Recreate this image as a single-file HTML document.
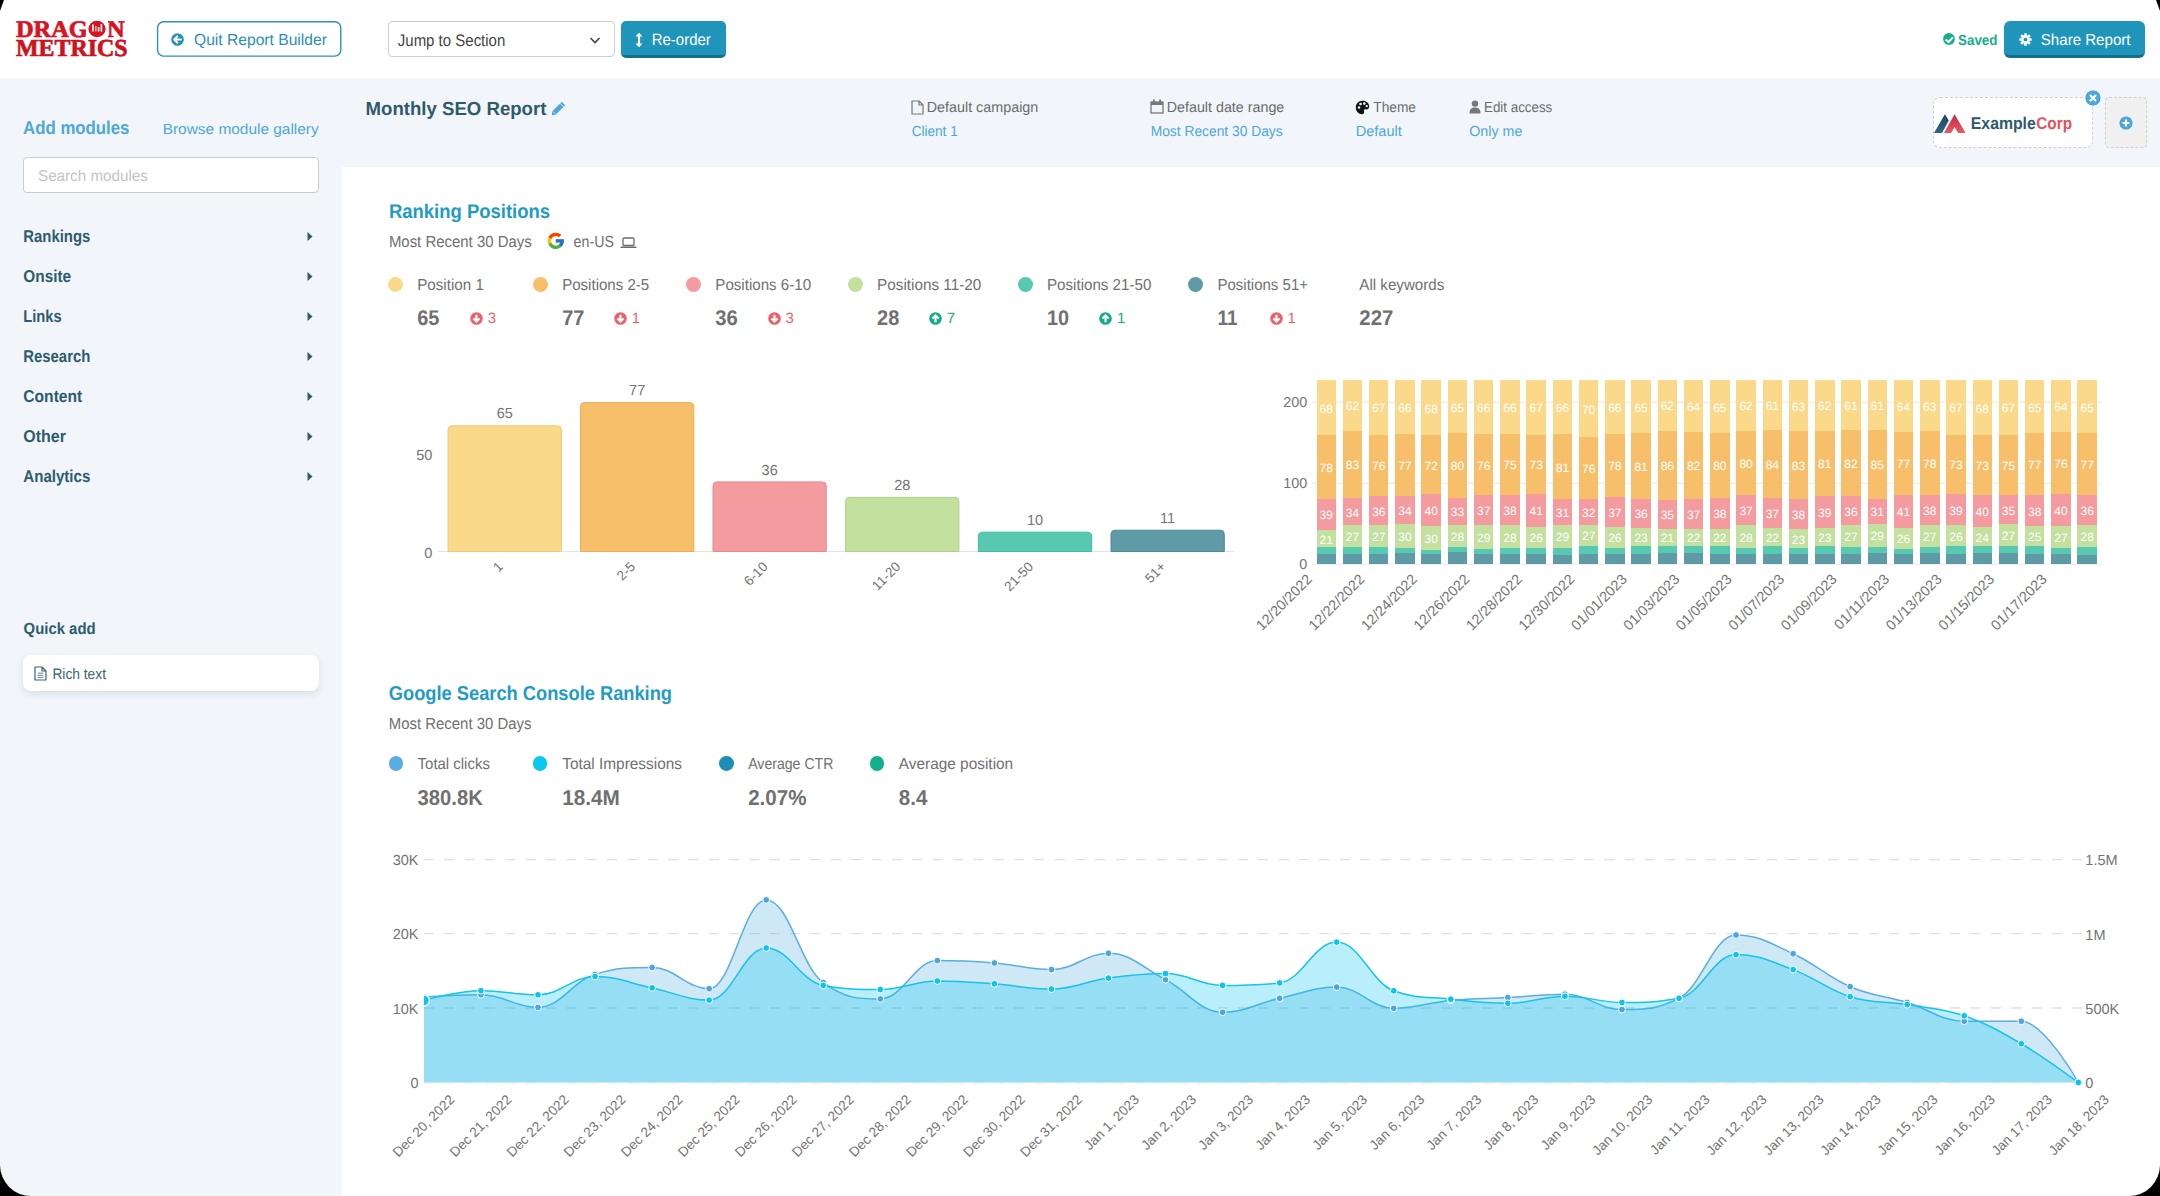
<!DOCTYPE html><html><head><meta charset="utf-8"><style>
html,body{margin:0;padding:0;width:2160px;height:1196px;overflow:hidden;background:#fff;}
body{position:relative;font-family:"Liberation Sans", sans-serif;}
.t{position:absolute;white-space:nowrap;text-rendering:geometricPrecision;}
.abs{position:absolute;}
</style></head><body>
<div class="abs" style="left:0;top:78px;width:2160px;height:1118px;background:#f2f6fa;"></div>
<div class="abs" style="left:342px;top:167px;width:1818px;height:1029px;background:#ffffff;"></div>


<svg class="abs" style="left:150px;top:15px" width="200" height="50"><rect x="7.6" y="6.7" width="183.2" height="34.4" rx="6" fill="#fff" stroke="#2a93bb" stroke-width="1.4"/></svg>
<svg class="abs" style="left:171px;top:32.8px" width="13" height="13" viewBox="0 0 13 13"><circle cx="6.5" cy="6.5" r="6.3" fill="#2590b8"/><path d="M3.2 6.5 L6.3 3.4 M3.2 6.5 L6.3 9.6 M3.4 6.5 H9.8" stroke="#fff" stroke-width="2" fill="none" stroke-linecap="round"/></svg>

<div class="abs" style="left:387.5px;top:21.2px;width:225.5px;height:33.5px;border:1px solid #cfcfcf;border-radius:4px;background:#fff;"></div>

<svg class="abs" style="left:589px;top:36px" width="12" height="9" viewBox="0 0 12 9"><path d="M1.5 2 L6 6.5 L10.5 2" stroke="#444" stroke-width="1.6" fill="none"/></svg>
<div class="abs" style="left:620.8px;top:21.2px;width:105.5px;height:33.6px;background:#1f95bb;border-bottom:3px solid #156f8b;border-radius:5px;"></div>
<svg class="abs" style="left:634px;top:31.5px" width="10" height="16" viewBox="0 0 10 16"><path d="M5 2 V14" stroke="#fff" stroke-width="2.2"/><path d="M1.5 4.5 L5 0.8 L8.5 4.5 Z M1.5 11.5 L5 15.2 L8.5 11.5 Z" fill="#fff"/></svg>

<svg class="abs" style="left:1941.5px;top:32px" width="14" height="14" viewBox="0 0 14 14"><circle cx="7" cy="7" r="5.9" fill="#17ae8a"/><path d="M3.6 7.4 L6.6 10 L10.8 5.4" stroke="#fff" stroke-width="2" fill="none"/></svg>

<div class="abs" style="left:2003.7px;top:21px;width:141.3px;height:34px;background:#1f95bb;border-bottom:3px solid #156f8b;border-radius:6px;"></div>
<svg class="abs" style="left:2018.5px;top:32.8px" width="13" height="13" viewBox="0 0 14 14"><g fill="#fff"><circle cx="7" cy="7" r="4.6"/><rect x="5.6" y="0.3" width="2.8" height="13.4" rx="0.6"/><rect x="5.6" y="0.3" width="2.8" height="13.4" rx="0.6" transform="rotate(45 7 7)"/><rect x="5.6" y="0.3" width="2.8" height="13.4" rx="0.6" transform="rotate(90 7 7)"/><rect x="5.6" y="0.3" width="2.8" height="13.4" rx="0.6" transform="rotate(135 7 7)"/></g><circle cx="7" cy="7" r="2" fill="#1f95bb"/></svg>


<svg class="abs" style="left:551px;top:100.5px" width="15" height="15" viewBox="0 0 15 15"><path d="M10.8 0.8 L14.2 4.2 L4.6 13.8 L0.8 14.2 L1.2 10.4 Z" fill="#4ea7da"/><path d="M9.2 2.4 L12.6 5.8" stroke="#f2f6fa" stroke-width="0.9"/><path d="M2.2 10.6 L4.4 12.8" stroke="#f2f6fa" stroke-width="0.8"/></svg>








<svg class="abs" style="left:910.5px;top:99.5px" width="13" height="15" viewBox="0 0 13 15"><path d="M1 1 H8 L12 5 V14 H1 Z M8 1 V5 H12" stroke="#777" stroke-width="1.2" fill="none" stroke-linejoin="round"/></svg>
<svg class="abs" style="left:1149.5px;top:99px" width="14" height="15" viewBox="0 0 14 15"><rect x="1" y="3" width="12" height="11" stroke="#777" stroke-width="1.3" fill="none"/><rect x="1" y="3" width="12" height="3" fill="#777"/><rect x="3" y="0.5" width="1.8" height="3.5" fill="#777"/><rect x="9.2" y="0.5" width="1.8" height="3.5" fill="#777"/></svg>
<svg class="abs" style="left:1354.5px;top:99.5px" width="15" height="15" viewBox="0 0 15 15"><path d="M7.5 0.8 C11.6 0.8 14.2 3.5 14.2 6.6 C14.2 9.2 12 9.6 10.5 9.3 C9.2 9.1 8.6 10 9 11 C9.6 12.4 9 14.2 7.2 14.2 C3.5 14.2 0.8 11.3 0.8 7.5 C0.8 3.6 3.8 0.8 7.5 0.8 Z" fill="#111"/><circle cx="4" cy="7.5" r="1.3" fill="#f2f6fa"/><circle cx="5.5" cy="4" r="1.3" fill="#f2f6fa"/><circle cx="9.3" cy="3.6" r="1.3" fill="#f2f6fa"/><circle cx="11.8" cy="6.2" r="1.1" fill="#f2f6fa"/></svg>
<svg class="abs" style="left:1468.5px;top:99.5px" width="12" height="14" viewBox="0 0 12 14"><circle cx="6" cy="3.6" r="3.2" fill="#777"/><path d="M0.5 13.5 C0.5 9 2.5 7.6 6 7.6 C9.5 7.6 11.5 9 11.5 13.5 Z" fill="#777"/></svg>
<div class="abs" style="left:1933px;top:97px;width:157.5px;height:49px;border:1px dashed #cfcfcf;border-radius:7px;background:#fff;"></div>
<svg class="abs" style="left:1934px;top:114px" width="33" height="20" viewBox="0 0 33 20"><defs><linearGradient id="gd" x1="0" y1="0" x2="0" y2="1"><stop offset="0" stop-color="#1e4860"/><stop offset="1" stop-color="#2f6683"/></linearGradient><linearGradient id="gr" x1="0" y1="0" x2="0" y2="1"><stop offset="0" stop-color="#c92848"/><stop offset="1" stop-color="#e35c5e"/></linearGradient></defs><path d="M0 18.9 L10.9 0.3 L14.8 6.6 L8 18.9 Z" fill="url(#gd)"/><path d="M9.9 18.9 L20.6 0.3 L31.6 18.9 L24.2 18.9 L20.6 13 L17.1 18.9 Z" fill="url(#gr)"/></svg>


<svg class="abs" style="left:2084px;top:89.3px" width="18" height="18" viewBox="0 0 18 18"><circle cx="9" cy="9" r="8.2" fill="#4ea7da" stroke="#fff" stroke-width="1"/><path d="M6 6 L12 12 M12 6 L6 12" stroke="#fff" stroke-width="2.2"/></svg>
<div class="abs" style="left:2104.5px;top:97px;width:40px;height:49px;border:1px dashed #cfcfcf;border-radius:4px;background:#f0f0f0;"></div>
<svg class="abs" style="left:2118.5px;top:115.7px" width="14" height="14" viewBox="0 0 14 14"><circle cx="7" cy="7" r="6.6" fill="#4ea7da"/><path d="M3.6 7 H10.4 M7 3.6 V10.4" stroke="#fff" stroke-width="2"/></svg>


<div class="abs" style="left:23.1px;top:157.1px;width:293.6px;height:33.6px;border:1px solid #cccccc;border-radius:4px;background:#fff;"></div>


<svg class="abs" style="left:307px;top:230.9px" width="6" height="11" viewBox="0 0 6 11"><path d="M0.5 1 L5.5 5.5 L0.5 10 Z" fill="#2d5b6f"/></svg>

<svg class="abs" style="left:307px;top:270.9px" width="6" height="11" viewBox="0 0 6 11"><path d="M0.5 1 L5.5 5.5 L0.5 10 Z" fill="#2d5b6f"/></svg>

<svg class="abs" style="left:307px;top:310.9px" width="6" height="11" viewBox="0 0 6 11"><path d="M0.5 1 L5.5 5.5 L0.5 10 Z" fill="#2d5b6f"/></svg>

<svg class="abs" style="left:307px;top:350.9px" width="6" height="11" viewBox="0 0 6 11"><path d="M0.5 1 L5.5 5.5 L0.5 10 Z" fill="#2d5b6f"/></svg>

<svg class="abs" style="left:307px;top:390.9px" width="6" height="11" viewBox="0 0 6 11"><path d="M0.5 1 L5.5 5.5 L0.5 10 Z" fill="#2d5b6f"/></svg>

<svg class="abs" style="left:307px;top:430.9px" width="6" height="11" viewBox="0 0 6 11"><path d="M0.5 1 L5.5 5.5 L0.5 10 Z" fill="#2d5b6f"/></svg>

<svg class="abs" style="left:307px;top:470.9px" width="6" height="11" viewBox="0 0 6 11"><path d="M0.5 1 L5.5 5.5 L0.5 10 Z" fill="#2d5b6f"/></svg>

<div class="abs" style="left:23.2px;top:654.7px;width:295.8px;height:35.9px;border-radius:8px;background:#fff;box-shadow:0 3px 7px rgba(40,70,90,0.13);"></div>
<svg class="abs" style="left:33.5px;top:665.8px" width="13" height="15" viewBox="0 0 13 15"><path d="M1 1 H8 L12 5 V14 H1 Z M8 1 V5 H12" stroke="#3d6476" stroke-width="1.2" fill="none" stroke-linejoin="round"/><path d="M3.6 7.2 H9.4 M3.6 9.4 H9.4 M3.6 11.6 H9.4" stroke="#3d6476" stroke-width="0.8"/></svg>




<svg class="abs" style="left:546px;top:231px" width="19.5" height="19.5" viewBox="0 0 48 48"><path fill="#FFC107" d="M43.6 20H24v8h11.3C33.7 32.7 29.3 36 24 36c-6.6 0-12-5.4-12-12s5.4-12 12-12c3.1 0 5.8 1.2 7.9 3.1l5.7-5.7C34 6.1 29.3 4 24 4 13 4 4 13 4 24s9 20 20 20 20-9 20-20c0-1.3-.1-2.7-.4-4z"/><path fill="#FF3D00" d="M6.3 14.7l6.6 4.8C14.7 15.1 19 12 24 12c3.1 0 5.8 1.2 7.9 3.1l5.7-5.7C34 6.1 29.3 4 24 4 16.3 4 9.7 8.3 6.3 14.7z"/><path fill="#4CAF50" d="M24 44c5.2 0 9.9-2 13.4-5.2l-6.2-5.2C29.2 35.1 26.7 36 24 36c-5.2 0-9.6-3.3-11.3-8l-6.5 5C9.5 39.6 16.2 44 24 44z"/><path fill="#1976D2" d="M43.6 20H24v8h11.3c-.8 2.2-2.2 4.2-4.1 5.6l6.2 5.2C37 39.2 44 34 44 24c0-1.3-.1-2.7-.4-4z"/></svg>
<svg class="abs" style="left:619.5px;top:237px" width="17" height="12" viewBox="0 0 17 12"><rect x="3" y="1" width="11" height="7.5" rx="1" stroke="#6b6b6b" stroke-width="1.3" fill="none"/><rect x="0.5" y="9.6" width="16" height="1.5" rx="0.7" fill="#6b6b6b"/></svg>
<div class="abs" style="left:388.3px;top:276.8px;width:15px;height:15px;border-radius:50%;background:#fbd98b;"></div>


<svg class="abs" style="left:470.0px;top:311.8px" width="13" height="13" viewBox="0 0 13 13"><circle cx="6.5" cy="6.5" r="6.3" fill="#ee5f6b"/><path d="M6.5 2.8 V9.2 M3.4 6.4 L6.5 9.5 L9.6 6.4" stroke="#fff" stroke-width="2.1" fill="none"/></svg>

<div class="abs" style="left:532.8px;top:276.8px;width:15px;height:15px;border-radius:50%;background:#f7bf6a;"></div>


<svg class="abs" style="left:614.1px;top:311.8px" width="13" height="13" viewBox="0 0 13 13"><circle cx="6.5" cy="6.5" r="6.3" fill="#ee5f6b"/><path d="M6.5 2.8 V9.2 M3.4 6.4 L6.5 9.5 L9.6 6.4" stroke="#fff" stroke-width="2.1" fill="none"/></svg>

<div class="abs" style="left:686.1px;top:276.8px;width:15px;height:15px;border-radius:50%;background:#f49ba0;"></div>


<svg class="abs" style="left:767.7px;top:311.8px" width="13" height="13" viewBox="0 0 13 13"><circle cx="6.5" cy="6.5" r="6.3" fill="#ee5f6b"/><path d="M6.5 2.8 V9.2 M3.4 6.4 L6.5 9.5 L9.6 6.4" stroke="#fff" stroke-width="2.1" fill="none"/></svg>

<div class="abs" style="left:848.0px;top:276.8px;width:15px;height:15px;border-radius:50%;background:#c3e09f;"></div>


<svg class="abs" style="left:929.1px;top:311.8px" width="13" height="13" viewBox="0 0 13 13"><circle cx="6.5" cy="6.5" r="6.3" fill="#14ab8c"/><path d="M6.5 10.2 V3.8 M3.4 6.6 L6.5 3.5 L9.6 6.6" stroke="#fff" stroke-width="2.1" fill="none"/></svg>

<div class="abs" style="left:1018.0px;top:276.8px;width:15px;height:15px;border-radius:50%;background:#56c9b0;"></div>


<svg class="abs" style="left:1099.4px;top:311.8px" width="13" height="13" viewBox="0 0 13 13"><circle cx="6.5" cy="6.5" r="6.3" fill="#14ab8c"/><path d="M6.5 10.2 V3.8 M3.4 6.6 L6.5 3.5 L9.6 6.6" stroke="#fff" stroke-width="2.1" fill="none"/></svg>

<div class="abs" style="left:1188.0px;top:276.8px;width:15px;height:15px;border-radius:50%;background:#5e9ba7;"></div>


<svg class="abs" style="left:1269.7px;top:311.8px" width="13" height="13" viewBox="0 0 13 13"><circle cx="6.5" cy="6.5" r="6.3" fill="#ee5f6b"/><path d="M6.5 2.8 V9.2 M3.4 6.4 L6.5 9.5 L9.6 6.4" stroke="#fff" stroke-width="2.1" fill="none"/></svg>





<div class="abs" style="left:388.5px;top:756.3px;width:14.8px;height:14.8px;border-radius:50%;background:#5aade0;"></div>


<div class="abs" style="left:532.7px;top:756.3px;width:14.8px;height:14.8px;border-radius:50%;background:#0bc8f0;"></div>


<div class="abs" style="left:719.1px;top:756.3px;width:14.8px;height:14.8px;border-radius:50%;background:#1e8db5;"></div>


<div class="abs" style="left:869.7px;top:756.3px;width:14.8px;height:14.8px;border-radius:50%;background:#11b089;"></div>


<svg class="abs" style="left:0;top:0" width="2160" height="1196" viewBox="0 0 2160 1196" font-family="Liberation Sans, sans-serif" text-rendering="geometricPrecision">
<line x1="438" y1="551.5" x2="1234" y2="551.5" stroke="#e3e3e3" stroke-width="1.2"/>
<path d="M 448.10 551.50 V 429.79 Q 448.10 425.79 452.10 425.79 H 557.40 Q 561.40 425.79 561.40 429.79 V 551.50 Z" fill="#fbd98b" stroke="#efc777" stroke-width="1"/>
<text x="504.75" y="418.49" font-size="14.54" fill="#747474" text-anchor="middle" >65</text>
<text x="503.75" y="567.50" font-size="13.5" fill="#747474" text-anchor="end" transform="rotate(-45 503.75 567.50)">1</text>
<path d="M 580.50 551.50 V 406.58 Q 580.50 402.58 584.50 402.58 H 689.80 Q 693.80 402.58 693.80 406.58 V 551.50 Z" fill="#f7bf6a" stroke="#ecae58" stroke-width="1"/>
<text x="637.15" y="395.28" font-size="14.54" fill="#747474" text-anchor="middle" >77</text>
<text x="636.15" y="567.50" font-size="13.5" fill="#747474" text-anchor="end" transform="rotate(-45 636.15 567.50)">2-5</text>
<path d="M 713.00 551.50 V 485.88 Q 713.00 481.88 717.00 481.88 H 822.30 Q 826.30 481.88 826.30 485.88 V 551.50 Z" fill="#f49ba0" stroke="#e68a90" stroke-width="1"/>
<text x="769.65" y="474.58" font-size="14.54" fill="#747474" text-anchor="middle" >36</text>
<text x="768.65" y="567.50" font-size="13.5" fill="#747474" text-anchor="end" transform="rotate(-45 768.65 567.50)">6-10</text>
<path d="M 845.60 551.50 V 501.35 Q 845.60 497.35 849.60 497.35 H 954.90 Q 958.90 497.35 958.90 501.35 V 551.50 Z" fill="#c3e09f" stroke="#afd18b" stroke-width="1"/>
<text x="902.25" y="490.05" font-size="14.54" fill="#747474" text-anchor="middle" >28</text>
<text x="901.25" y="567.50" font-size="13.5" fill="#747474" text-anchor="end" transform="rotate(-45 901.25 567.50)">11-20</text>
<path d="M 978.40 551.50 V 536.16 Q 978.40 532.16 982.40 532.16 H 1087.70 Q 1091.70 532.16 1091.70 536.16 V 551.50 Z" fill="#56c9b0" stroke="#47b89f" stroke-width="1"/>
<text x="1035.05" y="524.86" font-size="14.54" fill="#747474" text-anchor="middle" >10</text>
<text x="1034.05" y="567.50" font-size="13.5" fill="#747474" text-anchor="end" transform="rotate(-45 1034.05 567.50)">21-50</text>
<path d="M 1111.00 551.50 V 534.23 Q 1111.00 530.23 1115.00 530.23 H 1220.30 Q 1224.30 530.23 1224.30 534.23 V 551.50 Z" fill="#5e9ba7" stroke="#4f8b96" stroke-width="1"/>
<text x="1167.65" y="522.93" font-size="14.54" fill="#747474" text-anchor="middle" >11</text>
<text x="1166.65" y="567.50" font-size="13.5" fill="#747474" text-anchor="end" transform="rotate(-45 1166.65 567.50)">51+</text>
<text x="432.40" y="460.00" font-size="14.54" fill="#747474" text-anchor="end" >50</text>
<text x="432.40" y="557.50" font-size="14.54" fill="#747474" text-anchor="end" >0</text>
<line x1="1312" y1="564.2" x2="2101" y2="564.2" stroke="#e6e6e6" stroke-width="1"/>
<line x1="1312" y1="483.2" x2="2101" y2="483.2" stroke="#e6e6e6" stroke-width="1"/>
<line x1="1312" y1="402.2" x2="2101" y2="402.2" stroke="#e6e6e6" stroke-width="1"/>
<text x="1307.20" y="407.20" font-size="14.39" fill="#747474" text-anchor="end" >200</text>
<text x="1307.20" y="488.20" font-size="14.39" fill="#747474" text-anchor="end" >100</text>
<text x="1307.20" y="569.20" font-size="14.39" fill="#747474" text-anchor="end" >0</text>
<rect x="1316.50" y="380.33" width="19.5" height="183.87" fill="#fbd98b" shape-rendering="crispEdges"/>
<rect x="1316.50" y="435.41" width="19.5" height="128.79" fill="#f7bf6a" shape-rendering="crispEdges"/>
<rect x="1316.50" y="498.59" width="19.5" height="65.61" fill="#f49ba0" shape-rendering="crispEdges"/>
<rect x="1316.50" y="530.18" width="19.5" height="34.02" fill="#c3e09f" shape-rendering="crispEdges"/>
<rect x="1316.50" y="547.19" width="19.5" height="17.01" fill="#56c9b0" shape-rendering="crispEdges"/>
<rect x="1316.50" y="554.48" width="19.5" height="9.72" fill="#5e9ba7" shape-rendering="crispEdges"/>
<text x="1312.95" y="580.20" font-size="14.4" fill="#747474" text-anchor="end" transform="rotate(-45 1312.95 580.20)">12/20/2022</text>
<rect x="1342.74" y="380.33" width="19.5" height="183.87" fill="#fbd98b" shape-rendering="crispEdges"/>
<rect x="1342.74" y="430.55" width="19.5" height="133.65" fill="#f7bf6a" shape-rendering="crispEdges"/>
<rect x="1342.74" y="497.78" width="19.5" height="66.42" fill="#f49ba0" shape-rendering="crispEdges"/>
<rect x="1342.74" y="525.32" width="19.5" height="38.88" fill="#c3e09f" shape-rendering="crispEdges"/>
<rect x="1342.74" y="547.19" width="19.5" height="17.01" fill="#56c9b0" shape-rendering="crispEdges"/>
<rect x="1342.74" y="554.48" width="19.5" height="9.72" fill="#5e9ba7" shape-rendering="crispEdges"/>
<rect x="1368.98" y="380.33" width="19.5" height="183.87" fill="#fbd98b" shape-rendering="crispEdges"/>
<rect x="1368.98" y="434.60" width="19.5" height="129.60" fill="#f7bf6a" shape-rendering="crispEdges"/>
<rect x="1368.98" y="496.16" width="19.5" height="68.04" fill="#f49ba0" shape-rendering="crispEdges"/>
<rect x="1368.98" y="525.32" width="19.5" height="38.88" fill="#c3e09f" shape-rendering="crispEdges"/>
<rect x="1368.98" y="547.19" width="19.5" height="17.01" fill="#56c9b0" shape-rendering="crispEdges"/>
<rect x="1368.98" y="553.67" width="19.5" height="10.53" fill="#5e9ba7" shape-rendering="crispEdges"/>
<text x="1365.43" y="580.20" font-size="14.4" fill="#747474" text-anchor="end" transform="rotate(-45 1365.43 580.20)">12/22/2022</text>
<rect x="1395.22" y="380.33" width="19.5" height="183.87" fill="#fbd98b" shape-rendering="crispEdges"/>
<rect x="1395.22" y="433.79" width="19.5" height="130.41" fill="#f7bf6a" shape-rendering="crispEdges"/>
<rect x="1395.22" y="496.16" width="19.5" height="68.04" fill="#f49ba0" shape-rendering="crispEdges"/>
<rect x="1395.22" y="523.70" width="19.5" height="40.50" fill="#c3e09f" shape-rendering="crispEdges"/>
<rect x="1395.22" y="548.00" width="19.5" height="16.20" fill="#56c9b0" shape-rendering="crispEdges"/>
<rect x="1395.22" y="552.86" width="19.5" height="11.34" fill="#5e9ba7" shape-rendering="crispEdges"/>
<rect x="1421.46" y="380.33" width="19.5" height="183.87" fill="#fbd98b" shape-rendering="crispEdges"/>
<rect x="1421.46" y="435.41" width="19.5" height="128.79" fill="#f7bf6a" shape-rendering="crispEdges"/>
<rect x="1421.46" y="493.73" width="19.5" height="70.47" fill="#f49ba0" shape-rendering="crispEdges"/>
<rect x="1421.46" y="526.13" width="19.5" height="38.07" fill="#c3e09f" shape-rendering="crispEdges"/>
<rect x="1421.46" y="550.43" width="19.5" height="13.77" fill="#56c9b0" shape-rendering="crispEdges"/>
<rect x="1421.46" y="553.67" width="19.5" height="10.53" fill="#5e9ba7" shape-rendering="crispEdges"/>
<text x="1417.91" y="580.20" font-size="14.4" fill="#747474" text-anchor="end" transform="rotate(-45 1417.91 580.20)">12/24/2022</text>
<rect x="1447.70" y="380.33" width="19.5" height="183.87" fill="#fbd98b" shape-rendering="crispEdges"/>
<rect x="1447.70" y="432.98" width="19.5" height="131.22" fill="#f7bf6a" shape-rendering="crispEdges"/>
<rect x="1447.70" y="497.78" width="19.5" height="66.42" fill="#f49ba0" shape-rendering="crispEdges"/>
<rect x="1447.70" y="524.51" width="19.5" height="39.69" fill="#c3e09f" shape-rendering="crispEdges"/>
<rect x="1447.70" y="547.19" width="19.5" height="17.01" fill="#56c9b0" shape-rendering="crispEdges"/>
<rect x="1447.70" y="552.05" width="19.5" height="12.15" fill="#5e9ba7" shape-rendering="crispEdges"/>
<rect x="1473.94" y="380.33" width="19.5" height="183.87" fill="#fbd98b" shape-rendering="crispEdges"/>
<rect x="1473.94" y="433.79" width="19.5" height="130.41" fill="#f7bf6a" shape-rendering="crispEdges"/>
<rect x="1473.94" y="495.35" width="19.5" height="68.85" fill="#f49ba0" shape-rendering="crispEdges"/>
<rect x="1473.94" y="525.32" width="19.5" height="38.88" fill="#c3e09f" shape-rendering="crispEdges"/>
<rect x="1473.94" y="548.81" width="19.5" height="15.39" fill="#56c9b0" shape-rendering="crispEdges"/>
<rect x="1473.94" y="554.48" width="19.5" height="9.72" fill="#5e9ba7" shape-rendering="crispEdges"/>
<text x="1470.39" y="580.20" font-size="14.4" fill="#747474" text-anchor="end" transform="rotate(-45 1470.39 580.20)">12/26/2022</text>
<rect x="1500.18" y="380.33" width="19.5" height="183.87" fill="#fbd98b" shape-rendering="crispEdges"/>
<rect x="1500.18" y="433.79" width="19.5" height="130.41" fill="#f7bf6a" shape-rendering="crispEdges"/>
<rect x="1500.18" y="494.54" width="19.5" height="69.66" fill="#f49ba0" shape-rendering="crispEdges"/>
<rect x="1500.18" y="525.32" width="19.5" height="38.88" fill="#c3e09f" shape-rendering="crispEdges"/>
<rect x="1500.18" y="548.00" width="19.5" height="16.20" fill="#56c9b0" shape-rendering="crispEdges"/>
<rect x="1500.18" y="554.48" width="19.5" height="9.72" fill="#5e9ba7" shape-rendering="crispEdges"/>
<rect x="1526.42" y="380.33" width="19.5" height="183.87" fill="#fbd98b" shape-rendering="crispEdges"/>
<rect x="1526.42" y="434.60" width="19.5" height="129.60" fill="#f7bf6a" shape-rendering="crispEdges"/>
<rect x="1526.42" y="493.73" width="19.5" height="70.47" fill="#f49ba0" shape-rendering="crispEdges"/>
<rect x="1526.42" y="526.94" width="19.5" height="37.26" fill="#c3e09f" shape-rendering="crispEdges"/>
<rect x="1526.42" y="548.00" width="19.5" height="16.20" fill="#56c9b0" shape-rendering="crispEdges"/>
<rect x="1526.42" y="553.67" width="19.5" height="10.53" fill="#5e9ba7" shape-rendering="crispEdges"/>
<text x="1522.87" y="580.20" font-size="14.4" fill="#747474" text-anchor="end" transform="rotate(-45 1522.87 580.20)">12/28/2022</text>
<rect x="1552.66" y="380.33" width="19.5" height="183.87" fill="#fbd98b" shape-rendering="crispEdges"/>
<rect x="1552.66" y="433.79" width="19.5" height="130.41" fill="#f7bf6a" shape-rendering="crispEdges"/>
<rect x="1552.66" y="499.40" width="19.5" height="64.80" fill="#f49ba0" shape-rendering="crispEdges"/>
<rect x="1552.66" y="524.51" width="19.5" height="39.69" fill="#c3e09f" shape-rendering="crispEdges"/>
<rect x="1552.66" y="548.00" width="19.5" height="16.20" fill="#56c9b0" shape-rendering="crispEdges"/>
<rect x="1552.66" y="555.29" width="19.5" height="8.91" fill="#5e9ba7" shape-rendering="crispEdges"/>
<rect x="1578.90" y="380.33" width="19.5" height="183.87" fill="#fbd98b" shape-rendering="crispEdges"/>
<rect x="1578.90" y="437.03" width="19.5" height="127.17" fill="#f7bf6a" shape-rendering="crispEdges"/>
<rect x="1578.90" y="498.59" width="19.5" height="65.61" fill="#f49ba0" shape-rendering="crispEdges"/>
<rect x="1578.90" y="524.51" width="19.5" height="39.69" fill="#c3e09f" shape-rendering="crispEdges"/>
<rect x="1578.90" y="546.38" width="19.5" height="17.82" fill="#56c9b0" shape-rendering="crispEdges"/>
<rect x="1578.90" y="553.67" width="19.5" height="10.53" fill="#5e9ba7" shape-rendering="crispEdges"/>
<text x="1575.35" y="580.20" font-size="14.4" fill="#747474" text-anchor="end" transform="rotate(-45 1575.35 580.20)">12/30/2022</text>
<rect x="1605.14" y="380.33" width="19.5" height="183.87" fill="#fbd98b" shape-rendering="crispEdges"/>
<rect x="1605.14" y="433.79" width="19.5" height="130.41" fill="#f7bf6a" shape-rendering="crispEdges"/>
<rect x="1605.14" y="496.97" width="19.5" height="67.23" fill="#f49ba0" shape-rendering="crispEdges"/>
<rect x="1605.14" y="526.94" width="19.5" height="37.26" fill="#c3e09f" shape-rendering="crispEdges"/>
<rect x="1605.14" y="548.00" width="19.5" height="16.20" fill="#56c9b0" shape-rendering="crispEdges"/>
<rect x="1605.14" y="553.67" width="19.5" height="10.53" fill="#5e9ba7" shape-rendering="crispEdges"/>
<rect x="1631.38" y="380.33" width="19.5" height="183.87" fill="#fbd98b" shape-rendering="crispEdges"/>
<rect x="1631.38" y="432.98" width="19.5" height="131.22" fill="#f7bf6a" shape-rendering="crispEdges"/>
<rect x="1631.38" y="498.59" width="19.5" height="65.61" fill="#f49ba0" shape-rendering="crispEdges"/>
<rect x="1631.38" y="527.75" width="19.5" height="36.45" fill="#c3e09f" shape-rendering="crispEdges"/>
<rect x="1631.38" y="546.38" width="19.5" height="17.82" fill="#56c9b0" shape-rendering="crispEdges"/>
<rect x="1631.38" y="554.48" width="19.5" height="9.72" fill="#5e9ba7" shape-rendering="crispEdges"/>
<text x="1627.83" y="580.20" font-size="14.4" fill="#747474" text-anchor="end" transform="rotate(-45 1627.83 580.20)">01/01/2023</text>
<rect x="1657.62" y="380.33" width="19.5" height="183.87" fill="#fbd98b" shape-rendering="crispEdges"/>
<rect x="1657.62" y="430.55" width="19.5" height="133.65" fill="#f7bf6a" shape-rendering="crispEdges"/>
<rect x="1657.62" y="500.21" width="19.5" height="63.99" fill="#f49ba0" shape-rendering="crispEdges"/>
<rect x="1657.62" y="528.56" width="19.5" height="35.64" fill="#c3e09f" shape-rendering="crispEdges"/>
<rect x="1657.62" y="545.57" width="19.5" height="18.63" fill="#56c9b0" shape-rendering="crispEdges"/>
<rect x="1657.62" y="552.86" width="19.5" height="11.34" fill="#5e9ba7" shape-rendering="crispEdges"/>
<rect x="1683.86" y="380.33" width="19.5" height="183.87" fill="#fbd98b" shape-rendering="crispEdges"/>
<rect x="1683.86" y="432.17" width="19.5" height="132.03" fill="#f7bf6a" shape-rendering="crispEdges"/>
<rect x="1683.86" y="498.59" width="19.5" height="65.61" fill="#f49ba0" shape-rendering="crispEdges"/>
<rect x="1683.86" y="528.56" width="19.5" height="35.64" fill="#c3e09f" shape-rendering="crispEdges"/>
<rect x="1683.86" y="546.38" width="19.5" height="17.82" fill="#56c9b0" shape-rendering="crispEdges"/>
<rect x="1683.86" y="552.86" width="19.5" height="11.34" fill="#5e9ba7" shape-rendering="crispEdges"/>
<text x="1680.31" y="580.20" font-size="14.4" fill="#747474" text-anchor="end" transform="rotate(-45 1680.31 580.20)">01/03/2023</text>
<rect x="1710.10" y="380.33" width="19.5" height="183.87" fill="#fbd98b" shape-rendering="crispEdges"/>
<rect x="1710.10" y="432.98" width="19.5" height="131.22" fill="#f7bf6a" shape-rendering="crispEdges"/>
<rect x="1710.10" y="497.78" width="19.5" height="66.42" fill="#f49ba0" shape-rendering="crispEdges"/>
<rect x="1710.10" y="528.56" width="19.5" height="35.64" fill="#c3e09f" shape-rendering="crispEdges"/>
<rect x="1710.10" y="546.38" width="19.5" height="17.82" fill="#56c9b0" shape-rendering="crispEdges"/>
<rect x="1710.10" y="553.67" width="19.5" height="10.53" fill="#5e9ba7" shape-rendering="crispEdges"/>
<rect x="1736.34" y="380.33" width="19.5" height="183.87" fill="#fbd98b" shape-rendering="crispEdges"/>
<rect x="1736.34" y="430.55" width="19.5" height="133.65" fill="#f7bf6a" shape-rendering="crispEdges"/>
<rect x="1736.34" y="495.35" width="19.5" height="68.85" fill="#f49ba0" shape-rendering="crispEdges"/>
<rect x="1736.34" y="525.32" width="19.5" height="38.88" fill="#c3e09f" shape-rendering="crispEdges"/>
<rect x="1736.34" y="548.00" width="19.5" height="16.20" fill="#56c9b0" shape-rendering="crispEdges"/>
<rect x="1736.34" y="554.48" width="19.5" height="9.72" fill="#5e9ba7" shape-rendering="crispEdges"/>
<text x="1732.79" y="580.20" font-size="14.4" fill="#747474" text-anchor="end" transform="rotate(-45 1732.79 580.20)">01/05/2023</text>
<rect x="1762.58" y="380.33" width="19.5" height="183.87" fill="#fbd98b" shape-rendering="crispEdges"/>
<rect x="1762.58" y="429.74" width="19.5" height="134.46" fill="#f7bf6a" shape-rendering="crispEdges"/>
<rect x="1762.58" y="497.78" width="19.5" height="66.42" fill="#f49ba0" shape-rendering="crispEdges"/>
<rect x="1762.58" y="527.75" width="19.5" height="36.45" fill="#c3e09f" shape-rendering="crispEdges"/>
<rect x="1762.58" y="545.57" width="19.5" height="18.63" fill="#56c9b0" shape-rendering="crispEdges"/>
<rect x="1762.58" y="553.67" width="19.5" height="10.53" fill="#5e9ba7" shape-rendering="crispEdges"/>
<rect x="1788.82" y="380.33" width="19.5" height="183.87" fill="#fbd98b" shape-rendering="crispEdges"/>
<rect x="1788.82" y="431.36" width="19.5" height="132.84" fill="#f7bf6a" shape-rendering="crispEdges"/>
<rect x="1788.82" y="498.59" width="19.5" height="65.61" fill="#f49ba0" shape-rendering="crispEdges"/>
<rect x="1788.82" y="529.37" width="19.5" height="34.83" fill="#c3e09f" shape-rendering="crispEdges"/>
<rect x="1788.82" y="548.00" width="19.5" height="16.20" fill="#56c9b0" shape-rendering="crispEdges"/>
<rect x="1788.82" y="554.48" width="19.5" height="9.72" fill="#5e9ba7" shape-rendering="crispEdges"/>
<text x="1785.27" y="580.20" font-size="14.4" fill="#747474" text-anchor="end" transform="rotate(-45 1785.27 580.20)">01/07/2023</text>
<rect x="1815.06" y="380.33" width="19.5" height="183.87" fill="#fbd98b" shape-rendering="crispEdges"/>
<rect x="1815.06" y="430.55" width="19.5" height="133.65" fill="#f7bf6a" shape-rendering="crispEdges"/>
<rect x="1815.06" y="496.16" width="19.5" height="68.04" fill="#f49ba0" shape-rendering="crispEdges"/>
<rect x="1815.06" y="527.75" width="19.5" height="36.45" fill="#c3e09f" shape-rendering="crispEdges"/>
<rect x="1815.06" y="546.38" width="19.5" height="17.82" fill="#56c9b0" shape-rendering="crispEdges"/>
<rect x="1815.06" y="554.48" width="19.5" height="9.72" fill="#5e9ba7" shape-rendering="crispEdges"/>
<rect x="1841.30" y="380.33" width="19.5" height="183.87" fill="#fbd98b" shape-rendering="crispEdges"/>
<rect x="1841.30" y="429.74" width="19.5" height="134.46" fill="#f7bf6a" shape-rendering="crispEdges"/>
<rect x="1841.30" y="496.16" width="19.5" height="68.04" fill="#f49ba0" shape-rendering="crispEdges"/>
<rect x="1841.30" y="525.32" width="19.5" height="38.88" fill="#c3e09f" shape-rendering="crispEdges"/>
<rect x="1841.30" y="547.19" width="19.5" height="17.01" fill="#56c9b0" shape-rendering="crispEdges"/>
<rect x="1841.30" y="553.67" width="19.5" height="10.53" fill="#5e9ba7" shape-rendering="crispEdges"/>
<text x="1837.75" y="580.20" font-size="14.4" fill="#747474" text-anchor="end" transform="rotate(-45 1837.75 580.20)">01/09/2023</text>
<rect x="1867.54" y="380.33" width="19.5" height="183.87" fill="#fbd98b" shape-rendering="crispEdges"/>
<rect x="1867.54" y="429.74" width="19.5" height="134.46" fill="#f7bf6a" shape-rendering="crispEdges"/>
<rect x="1867.54" y="498.59" width="19.5" height="65.61" fill="#f49ba0" shape-rendering="crispEdges"/>
<rect x="1867.54" y="523.70" width="19.5" height="40.50" fill="#c3e09f" shape-rendering="crispEdges"/>
<rect x="1867.54" y="547.19" width="19.5" height="17.01" fill="#56c9b0" shape-rendering="crispEdges"/>
<rect x="1867.54" y="552.86" width="19.5" height="11.34" fill="#5e9ba7" shape-rendering="crispEdges"/>
<rect x="1893.78" y="380.33" width="19.5" height="183.87" fill="#fbd98b" shape-rendering="crispEdges"/>
<rect x="1893.78" y="432.17" width="19.5" height="132.03" fill="#f7bf6a" shape-rendering="crispEdges"/>
<rect x="1893.78" y="494.54" width="19.5" height="69.66" fill="#f49ba0" shape-rendering="crispEdges"/>
<rect x="1893.78" y="527.75" width="19.5" height="36.45" fill="#c3e09f" shape-rendering="crispEdges"/>
<rect x="1893.78" y="548.81" width="19.5" height="15.39" fill="#56c9b0" shape-rendering="crispEdges"/>
<rect x="1893.78" y="554.48" width="19.5" height="9.72" fill="#5e9ba7" shape-rendering="crispEdges"/>
<text x="1890.23" y="580.20" font-size="14.4" fill="#747474" text-anchor="end" transform="rotate(-45 1890.23 580.20)">01/11/2023</text>
<rect x="1920.02" y="380.33" width="19.5" height="183.87" fill="#fbd98b" shape-rendering="crispEdges"/>
<rect x="1920.02" y="431.36" width="19.5" height="132.84" fill="#f7bf6a" shape-rendering="crispEdges"/>
<rect x="1920.02" y="494.54" width="19.5" height="69.66" fill="#f49ba0" shape-rendering="crispEdges"/>
<rect x="1920.02" y="525.32" width="19.5" height="38.88" fill="#c3e09f" shape-rendering="crispEdges"/>
<rect x="1920.02" y="547.19" width="19.5" height="17.01" fill="#56c9b0" shape-rendering="crispEdges"/>
<rect x="1920.02" y="552.86" width="19.5" height="11.34" fill="#5e9ba7" shape-rendering="crispEdges"/>
<rect x="1946.26" y="380.33" width="19.5" height="183.87" fill="#fbd98b" shape-rendering="crispEdges"/>
<rect x="1946.26" y="434.60" width="19.5" height="129.60" fill="#f7bf6a" shape-rendering="crispEdges"/>
<rect x="1946.26" y="493.73" width="19.5" height="70.47" fill="#f49ba0" shape-rendering="crispEdges"/>
<rect x="1946.26" y="525.32" width="19.5" height="38.88" fill="#c3e09f" shape-rendering="crispEdges"/>
<rect x="1946.26" y="546.38" width="19.5" height="17.82" fill="#56c9b0" shape-rendering="crispEdges"/>
<rect x="1946.26" y="553.67" width="19.5" height="10.53" fill="#5e9ba7" shape-rendering="crispEdges"/>
<text x="1942.71" y="580.20" font-size="14.4" fill="#747474" text-anchor="end" transform="rotate(-45 1942.71 580.20)">01/13/2023</text>
<rect x="1972.50" y="380.33" width="19.5" height="183.87" fill="#fbd98b" shape-rendering="crispEdges"/>
<rect x="1972.50" y="435.41" width="19.5" height="128.79" fill="#f7bf6a" shape-rendering="crispEdges"/>
<rect x="1972.50" y="494.54" width="19.5" height="69.66" fill="#f49ba0" shape-rendering="crispEdges"/>
<rect x="1972.50" y="526.94" width="19.5" height="37.26" fill="#c3e09f" shape-rendering="crispEdges"/>
<rect x="1972.50" y="546.38" width="19.5" height="17.82" fill="#56c9b0" shape-rendering="crispEdges"/>
<rect x="1972.50" y="552.86" width="19.5" height="11.34" fill="#5e9ba7" shape-rendering="crispEdges"/>
<rect x="1998.74" y="380.33" width="19.5" height="183.87" fill="#fbd98b" shape-rendering="crispEdges"/>
<rect x="1998.74" y="434.60" width="19.5" height="129.60" fill="#f7bf6a" shape-rendering="crispEdges"/>
<rect x="1998.74" y="495.35" width="19.5" height="68.85" fill="#f49ba0" shape-rendering="crispEdges"/>
<rect x="1998.74" y="523.70" width="19.5" height="40.50" fill="#c3e09f" shape-rendering="crispEdges"/>
<rect x="1998.74" y="545.57" width="19.5" height="18.63" fill="#56c9b0" shape-rendering="crispEdges"/>
<rect x="1998.74" y="552.86" width="19.5" height="11.34" fill="#5e9ba7" shape-rendering="crispEdges"/>
<text x="1995.19" y="580.20" font-size="14.4" fill="#747474" text-anchor="end" transform="rotate(-45 1995.19 580.20)">01/15/2023</text>
<rect x="2024.98" y="380.33" width="19.5" height="183.87" fill="#fbd98b" shape-rendering="crispEdges"/>
<rect x="2024.98" y="432.98" width="19.5" height="131.22" fill="#f7bf6a" shape-rendering="crispEdges"/>
<rect x="2024.98" y="495.35" width="19.5" height="68.85" fill="#f49ba0" shape-rendering="crispEdges"/>
<rect x="2024.98" y="526.13" width="19.5" height="38.07" fill="#c3e09f" shape-rendering="crispEdges"/>
<rect x="2024.98" y="546.38" width="19.5" height="17.82" fill="#56c9b0" shape-rendering="crispEdges"/>
<rect x="2024.98" y="553.67" width="19.5" height="10.53" fill="#5e9ba7" shape-rendering="crispEdges"/>
<rect x="2051.22" y="380.33" width="19.5" height="183.87" fill="#fbd98b" shape-rendering="crispEdges"/>
<rect x="2051.22" y="432.17" width="19.5" height="132.03" fill="#f7bf6a" shape-rendering="crispEdges"/>
<rect x="2051.22" y="493.73" width="19.5" height="70.47" fill="#f49ba0" shape-rendering="crispEdges"/>
<rect x="2051.22" y="526.13" width="19.5" height="38.07" fill="#c3e09f" shape-rendering="crispEdges"/>
<rect x="2051.22" y="548.00" width="19.5" height="16.20" fill="#56c9b0" shape-rendering="crispEdges"/>
<rect x="2051.22" y="553.67" width="19.5" height="10.53" fill="#5e9ba7" shape-rendering="crispEdges"/>
<text x="2047.67" y="580.20" font-size="14.4" fill="#747474" text-anchor="end" transform="rotate(-45 2047.67 580.20)">01/17/2023</text>
<rect x="2077.46" y="380.33" width="19.5" height="183.87" fill="#fbd98b" shape-rendering="crispEdges"/>
<rect x="2077.46" y="432.98" width="19.5" height="131.22" fill="#f7bf6a" shape-rendering="crispEdges"/>
<rect x="2077.46" y="495.35" width="19.5" height="68.85" fill="#f49ba0" shape-rendering="crispEdges"/>
<rect x="2077.46" y="524.51" width="19.5" height="39.69" fill="#c3e09f" shape-rendering="crispEdges"/>
<rect x="2077.46" y="547.19" width="19.5" height="17.01" fill="#56c9b0" shape-rendering="crispEdges"/>
<rect x="2077.46" y="555.29" width="19.5" height="8.91" fill="#5e9ba7" shape-rendering="crispEdges"/>
<text x="1326.25" y="543.69" font-size="12.06" fill="#fff" text-anchor="middle" >21</text>
<text x="1326.25" y="519.39" font-size="12.06" fill="#fff" text-anchor="middle" >39</text>
<text x="1326.25" y="472.00" font-size="12.06" fill="#fff" text-anchor="middle" >78</text>
<text x="1326.25" y="412.87" font-size="12.06" fill="#fff" text-anchor="middle" >68</text>
<text x="1352.49" y="541.26" font-size="12.06" fill="#fff" text-anchor="middle" >27</text>
<text x="1352.49" y="516.55" font-size="12.06" fill="#fff" text-anchor="middle" >34</text>
<text x="1352.49" y="469.17" font-size="12.06" fill="#fff" text-anchor="middle" >83</text>
<text x="1352.49" y="410.44" font-size="12.06" fill="#fff" text-anchor="middle" >62</text>
<text x="1378.73" y="541.26" font-size="12.06" fill="#fff" text-anchor="middle" >27</text>
<text x="1378.73" y="515.74" font-size="12.06" fill="#fff" text-anchor="middle" >36</text>
<text x="1378.73" y="470.38" font-size="12.06" fill="#fff" text-anchor="middle" >76</text>
<text x="1378.73" y="412.47" font-size="12.06" fill="#fff" text-anchor="middle" >67</text>
<text x="1404.97" y="540.85" font-size="12.06" fill="#fff" text-anchor="middle" >30</text>
<text x="1404.97" y="514.93" font-size="12.06" fill="#fff" text-anchor="middle" >34</text>
<text x="1404.97" y="469.98" font-size="12.06" fill="#fff" text-anchor="middle" >77</text>
<text x="1404.97" y="412.06" font-size="12.06" fill="#fff" text-anchor="middle" >66</text>
<text x="1431.21" y="543.28" font-size="12.06" fill="#fff" text-anchor="middle" >30</text>
<text x="1431.21" y="514.93" font-size="12.06" fill="#fff" text-anchor="middle" >40</text>
<text x="1431.21" y="469.57" font-size="12.06" fill="#fff" text-anchor="middle" >72</text>
<text x="1431.21" y="412.87" font-size="12.06" fill="#fff" text-anchor="middle" >68</text>
<text x="1457.45" y="540.85" font-size="12.06" fill="#fff" text-anchor="middle" >28</text>
<text x="1457.45" y="516.15" font-size="12.06" fill="#fff" text-anchor="middle" >33</text>
<text x="1457.45" y="470.38" font-size="12.06" fill="#fff" text-anchor="middle" >80</text>
<text x="1457.45" y="411.66" font-size="12.06" fill="#fff" text-anchor="middle" >65</text>
<text x="1483.69" y="542.07" font-size="12.06" fill="#fff" text-anchor="middle" >29</text>
<text x="1483.69" y="515.34" font-size="12.06" fill="#fff" text-anchor="middle" >37</text>
<text x="1483.69" y="469.57" font-size="12.06" fill="#fff" text-anchor="middle" >76</text>
<text x="1483.69" y="412.06" font-size="12.06" fill="#fff" text-anchor="middle" >66</text>
<text x="1509.93" y="541.66" font-size="12.06" fill="#fff" text-anchor="middle" >28</text>
<text x="1509.93" y="514.93" font-size="12.06" fill="#fff" text-anchor="middle" >38</text>
<text x="1509.93" y="469.17" font-size="12.06" fill="#fff" text-anchor="middle" >75</text>
<text x="1509.93" y="412.06" font-size="12.06" fill="#fff" text-anchor="middle" >66</text>
<text x="1536.17" y="542.47" font-size="12.06" fill="#fff" text-anchor="middle" >26</text>
<text x="1536.17" y="515.34" font-size="12.06" fill="#fff" text-anchor="middle" >41</text>
<text x="1536.17" y="469.17" font-size="12.06" fill="#fff" text-anchor="middle" >73</text>
<text x="1536.17" y="412.47" font-size="12.06" fill="#fff" text-anchor="middle" >67</text>
<text x="1562.41" y="541.26" font-size="12.06" fill="#fff" text-anchor="middle" >29</text>
<text x="1562.41" y="516.96" font-size="12.06" fill="#fff" text-anchor="middle" >31</text>
<text x="1562.41" y="471.60" font-size="12.06" fill="#fff" text-anchor="middle" >81</text>
<text x="1562.41" y="412.06" font-size="12.06" fill="#fff" text-anchor="middle" >66</text>
<text x="1588.65" y="540.45" font-size="12.06" fill="#fff" text-anchor="middle" >27</text>
<text x="1588.65" y="516.55" font-size="12.06" fill="#fff" text-anchor="middle" >32</text>
<text x="1588.65" y="472.81" font-size="12.06" fill="#fff" text-anchor="middle" >76</text>
<text x="1588.65" y="413.68" font-size="12.06" fill="#fff" text-anchor="middle" >70</text>
<text x="1614.89" y="542.47" font-size="12.06" fill="#fff" text-anchor="middle" >26</text>
<text x="1614.89" y="516.96" font-size="12.06" fill="#fff" text-anchor="middle" >37</text>
<text x="1614.89" y="470.38" font-size="12.06" fill="#fff" text-anchor="middle" >78</text>
<text x="1614.89" y="412.06" font-size="12.06" fill="#fff" text-anchor="middle" >66</text>
<text x="1641.13" y="542.06" font-size="12.06" fill="#fff" text-anchor="middle" >23</text>
<text x="1641.13" y="518.17" font-size="12.06" fill="#fff" text-anchor="middle" >36</text>
<text x="1641.13" y="470.78" font-size="12.06" fill="#fff" text-anchor="middle" >81</text>
<text x="1641.13" y="411.65" font-size="12.06" fill="#fff" text-anchor="middle" >65</text>
<text x="1667.37" y="542.07" font-size="12.06" fill="#fff" text-anchor="middle" >21</text>
<text x="1667.37" y="519.39" font-size="12.06" fill="#fff" text-anchor="middle" >35</text>
<text x="1667.37" y="470.38" font-size="12.06" fill="#fff" text-anchor="middle" >86</text>
<text x="1667.37" y="410.44" font-size="12.06" fill="#fff" text-anchor="middle" >62</text>
<text x="1693.61" y="542.47" font-size="12.06" fill="#fff" text-anchor="middle" >22</text>
<text x="1693.61" y="518.57" font-size="12.06" fill="#fff" text-anchor="middle" >37</text>
<text x="1693.61" y="470.38" font-size="12.06" fill="#fff" text-anchor="middle" >82</text>
<text x="1693.61" y="411.25" font-size="12.06" fill="#fff" text-anchor="middle" >64</text>
<text x="1719.85" y="542.47" font-size="12.06" fill="#fff" text-anchor="middle" >22</text>
<text x="1719.85" y="518.17" font-size="12.06" fill="#fff" text-anchor="middle" >38</text>
<text x="1719.85" y="470.38" font-size="12.06" fill="#fff" text-anchor="middle" >80</text>
<text x="1719.85" y="411.66" font-size="12.06" fill="#fff" text-anchor="middle" >65</text>
<text x="1746.09" y="541.66" font-size="12.06" fill="#fff" text-anchor="middle" >28</text>
<text x="1746.09" y="515.34" font-size="12.06" fill="#fff" text-anchor="middle" >37</text>
<text x="1746.09" y="467.95" font-size="12.06" fill="#fff" text-anchor="middle" >80</text>
<text x="1746.09" y="410.44" font-size="12.06" fill="#fff" text-anchor="middle" >62</text>
<text x="1772.33" y="541.66" font-size="12.06" fill="#fff" text-anchor="middle" >22</text>
<text x="1772.33" y="517.76" font-size="12.06" fill="#fff" text-anchor="middle" >37</text>
<text x="1772.33" y="468.76" font-size="12.06" fill="#fff" text-anchor="middle" >84</text>
<text x="1772.33" y="410.03" font-size="12.06" fill="#fff" text-anchor="middle" >61</text>
<text x="1798.57" y="543.68" font-size="12.06" fill="#fff" text-anchor="middle" >23</text>
<text x="1798.57" y="518.98" font-size="12.06" fill="#fff" text-anchor="middle" >38</text>
<text x="1798.57" y="469.98" font-size="12.06" fill="#fff" text-anchor="middle" >83</text>
<text x="1798.57" y="410.85" font-size="12.06" fill="#fff" text-anchor="middle" >63</text>
<text x="1824.81" y="542.06" font-size="12.06" fill="#fff" text-anchor="middle" >23</text>
<text x="1824.81" y="516.95" font-size="12.06" fill="#fff" text-anchor="middle" >39</text>
<text x="1824.81" y="468.35" font-size="12.06" fill="#fff" text-anchor="middle" >81</text>
<text x="1824.81" y="410.44" font-size="12.06" fill="#fff" text-anchor="middle" >62</text>
<text x="1851.05" y="541.26" font-size="12.06" fill="#fff" text-anchor="middle" >27</text>
<text x="1851.05" y="515.74" font-size="12.06" fill="#fff" text-anchor="middle" >36</text>
<text x="1851.05" y="467.95" font-size="12.06" fill="#fff" text-anchor="middle" >82</text>
<text x="1851.05" y="410.04" font-size="12.06" fill="#fff" text-anchor="middle" >61</text>
<text x="1877.29" y="540.45" font-size="12.06" fill="#fff" text-anchor="middle" >29</text>
<text x="1877.29" y="516.14" font-size="12.06" fill="#fff" text-anchor="middle" >31</text>
<text x="1877.29" y="469.17" font-size="12.06" fill="#fff" text-anchor="middle" >85</text>
<text x="1877.29" y="410.04" font-size="12.06" fill="#fff" text-anchor="middle" >61</text>
<text x="1903.53" y="543.28" font-size="12.06" fill="#fff" text-anchor="middle" >26</text>
<text x="1903.53" y="516.14" font-size="12.06" fill="#fff" text-anchor="middle" >41</text>
<text x="1903.53" y="468.36" font-size="12.06" fill="#fff" text-anchor="middle" >77</text>
<text x="1903.53" y="411.25" font-size="12.06" fill="#fff" text-anchor="middle" >64</text>
<text x="1929.77" y="541.26" font-size="12.06" fill="#fff" text-anchor="middle" >27</text>
<text x="1929.77" y="514.93" font-size="12.06" fill="#fff" text-anchor="middle" >38</text>
<text x="1929.77" y="467.95" font-size="12.06" fill="#fff" text-anchor="middle" >78</text>
<text x="1929.77" y="410.85" font-size="12.06" fill="#fff" text-anchor="middle" >63</text>
<text x="1956.01" y="540.85" font-size="12.06" fill="#fff" text-anchor="middle" >26</text>
<text x="1956.01" y="514.53" font-size="12.06" fill="#fff" text-anchor="middle" >39</text>
<text x="1956.01" y="469.17" font-size="12.06" fill="#fff" text-anchor="middle" >73</text>
<text x="1956.01" y="412.47" font-size="12.06" fill="#fff" text-anchor="middle" >67</text>
<text x="1982.25" y="541.66" font-size="12.06" fill="#fff" text-anchor="middle" >24</text>
<text x="1982.25" y="515.74" font-size="12.06" fill="#fff" text-anchor="middle" >40</text>
<text x="1982.25" y="469.97" font-size="12.06" fill="#fff" text-anchor="middle" >73</text>
<text x="1982.25" y="412.87" font-size="12.06" fill="#fff" text-anchor="middle" >68</text>
<text x="2008.49" y="539.64" font-size="12.06" fill="#fff" text-anchor="middle" >27</text>
<text x="2008.49" y="514.53" font-size="12.06" fill="#fff" text-anchor="middle" >35</text>
<text x="2008.49" y="469.98" font-size="12.06" fill="#fff" text-anchor="middle" >75</text>
<text x="2008.49" y="412.47" font-size="12.06" fill="#fff" text-anchor="middle" >67</text>
<text x="2034.73" y="541.26" font-size="12.06" fill="#fff" text-anchor="middle" >25</text>
<text x="2034.73" y="515.74" font-size="12.06" fill="#fff" text-anchor="middle" >38</text>
<text x="2034.73" y="469.17" font-size="12.06" fill="#fff" text-anchor="middle" >77</text>
<text x="2034.73" y="411.66" font-size="12.06" fill="#fff" text-anchor="middle" >65</text>
<text x="2060.97" y="542.07" font-size="12.06" fill="#fff" text-anchor="middle" >27</text>
<text x="2060.97" y="514.93" font-size="12.06" fill="#fff" text-anchor="middle" >40</text>
<text x="2060.97" y="467.95" font-size="12.06" fill="#fff" text-anchor="middle" >76</text>
<text x="2060.97" y="411.25" font-size="12.06" fill="#fff" text-anchor="middle" >64</text>
<text x="2087.21" y="540.85" font-size="12.06" fill="#fff" text-anchor="middle" >28</text>
<text x="2087.21" y="514.93" font-size="12.06" fill="#fff" text-anchor="middle" >36</text>
<text x="2087.21" y="469.17" font-size="12.06" fill="#fff" text-anchor="middle" >77</text>
<text x="2087.21" y="411.66" font-size="12.06" fill="#fff" text-anchor="middle" >65</text>
<line x1="423.9" y1="859.6" x2="2088.3" y2="859.6" stroke="#e0e0e0" stroke-width="1.3" stroke-dasharray="10,10.35"/>
<line x1="423.9" y1="933.7" x2="2088.3" y2="933.7" stroke="#e0e0e0" stroke-width="1.3" stroke-dasharray="10,10.35"/>
<line x1="423.9" y1="1008.0" x2="2088.3" y2="1008.0" stroke="#e0e0e0" stroke-width="1.3" stroke-dasharray="10,10.35"/>
<path d="M 423.90 997.00 C 423.90 997.00 458.13 994.80 480.95 994.80 C 503.77 994.80 515.18 1007.40 538.00 1007.40 C 560.82 1007.40 572.23 981.30 595.05 974.40 C 617.87 967.50 629.28 967.50 652.10 967.50 C 674.92 967.50 686.33 988.70 709.15 988.70 C 731.97 988.70 743.38 899.90 766.20 899.90 C 789.02 899.90 800.43 966.30 823.25 982.60 C 846.07 998.90 857.48 998.90 880.30 998.90 C 903.12 998.90 914.53 960.60 937.35 960.60 C 960.17 960.60 971.58 961.20 994.40 963.00 C 1017.22 964.80 1028.63 969.60 1051.45 969.60 C 1074.27 969.60 1085.68 953.30 1108.50 953.30 C 1131.32 953.30 1142.73 967.90 1165.55 979.70 C 1188.37 991.50 1199.78 1012.30 1222.60 1012.30 C 1245.42 1012.30 1256.83 1003.34 1279.65 998.30 C 1302.47 993.26 1313.88 987.10 1336.70 987.10 C 1359.52 987.10 1370.93 1008.30 1393.75 1008.30 C 1416.57 1008.30 1427.98 1002.56 1450.80 1000.40 C 1473.62 998.24 1485.03 998.74 1507.85 997.50 C 1530.67 996.26 1542.08 994.20 1564.90 994.20 C 1587.72 994.20 1599.13 1009.60 1621.95 1009.60 C 1644.77 1009.60 1656.18 1009.60 1679.00 998.30 C 1701.82 987.00 1713.23 935.00 1736.05 935.00 C 1758.87 935.00 1770.28 943.41 1793.10 953.75 C 1815.92 964.09 1827.33 976.95 1850.15 986.70 C 1872.97 996.45 1884.38 995.59 1907.20 1002.50 C 1930.02 1009.41 1941.43 1021.25 1964.25 1021.25 C 1987.07 1021.25 1998.48 1021.25 2021.30 1021.25 C 2044.12 1021.25 2078.35 1082.50 2078.35 1082.50 L 2078.35 1082.4 L 423.90 1082.4 Z" fill="#4fa9dc" fill-opacity="0.27"/>
<path d="M 423.90 997.00 C 423.90 997.00 458.13 994.80 480.95 994.80 C 503.77 994.80 515.18 1007.40 538.00 1007.40 C 560.82 1007.40 572.23 981.30 595.05 974.40 C 617.87 967.50 629.28 967.50 652.10 967.50 C 674.92 967.50 686.33 988.70 709.15 988.70 C 731.97 988.70 743.38 899.90 766.20 899.90 C 789.02 899.90 800.43 966.30 823.25 982.60 C 846.07 998.90 857.48 998.90 880.30 998.90 C 903.12 998.90 914.53 960.60 937.35 960.60 C 960.17 960.60 971.58 961.20 994.40 963.00 C 1017.22 964.80 1028.63 969.60 1051.45 969.60 C 1074.27 969.60 1085.68 953.30 1108.50 953.30 C 1131.32 953.30 1142.73 967.90 1165.55 979.70 C 1188.37 991.50 1199.78 1012.30 1222.60 1012.30 C 1245.42 1012.30 1256.83 1003.34 1279.65 998.30 C 1302.47 993.26 1313.88 987.10 1336.70 987.10 C 1359.52 987.10 1370.93 1008.30 1393.75 1008.30 C 1416.57 1008.30 1427.98 1002.56 1450.80 1000.40 C 1473.62 998.24 1485.03 998.74 1507.85 997.50 C 1530.67 996.26 1542.08 994.20 1564.90 994.20 C 1587.72 994.20 1599.13 1009.60 1621.95 1009.60 C 1644.77 1009.60 1656.18 1009.60 1679.00 998.30 C 1701.82 987.00 1713.23 935.00 1736.05 935.00 C 1758.87 935.00 1770.28 943.41 1793.10 953.75 C 1815.92 964.09 1827.33 976.95 1850.15 986.70 C 1872.97 996.45 1884.38 995.59 1907.20 1002.50 C 1930.02 1009.41 1941.43 1021.25 1964.25 1021.25 C 1987.07 1021.25 1998.48 1021.25 2021.30 1021.25 C 2044.12 1021.25 2078.35 1082.50 2078.35 1082.50" fill="none" stroke="#5aaee0" stroke-width="1.5"/>
<path d="M 423.90 1000.50 C 423.90 1000.50 458.13 990.70 480.95 990.70 C 503.77 990.70 515.18 994.80 538.00 994.80 C 560.82 994.80 572.23 976.50 595.05 976.50 C 617.87 976.50 629.28 983.18 652.10 987.90 C 674.92 992.62 686.33 1000.10 709.15 1000.10 C 731.97 1000.10 743.38 948.00 766.20 948.00 C 789.02 948.00 800.43 981.30 823.25 985.40 C 846.07 989.50 857.48 989.50 880.30 989.50 C 903.12 989.50 914.53 981.00 937.35 981.00 C 960.17 981.00 971.58 982.18 994.40 983.80 C 1017.22 985.42 1028.63 989.10 1051.45 989.10 C 1074.27 989.10 1085.68 981.20 1108.50 978.10 C 1131.32 975.00 1142.73 973.60 1165.55 973.60 C 1188.37 973.60 1199.78 985.40 1222.60 985.40 C 1245.42 985.40 1256.83 985.40 1279.65 982.90 C 1302.47 980.40 1313.88 942.10 1336.70 942.10 C 1359.52 942.10 1370.93 982.40 1393.75 990.80 C 1416.57 999.20 1427.98 996.70 1450.80 999.20 C 1473.62 1001.70 1485.03 1003.30 1507.85 1003.30 C 1530.67 1003.30 1542.08 996.25 1564.90 996.25 C 1587.72 996.25 1599.13 1002.50 1621.95 1002.50 C 1644.77 1002.50 1656.18 1002.50 1679.00 998.30 C 1701.82 994.10 1713.23 954.60 1736.05 954.60 C 1758.87 954.60 1770.28 961.18 1793.10 969.60 C 1815.92 978.02 1827.33 989.70 1850.15 996.70 C 1872.97 1003.70 1884.38 1000.78 1907.20 1004.60 C 1930.02 1008.42 1941.43 1007.97 1964.25 1015.80 C 1987.07 1023.63 1998.48 1030.41 2021.30 1043.75 C 2044.12 1057.09 2078.35 1082.50 2078.35 1082.50 L 2078.35 1082.4 L 423.90 1082.4 Z" fill="#00c4ee" fill-opacity="0.28"/>
<path d="M 423.90 1000.50 C 423.90 1000.50 458.13 990.70 480.95 990.70 C 503.77 990.70 515.18 994.80 538.00 994.80 C 560.82 994.80 572.23 976.50 595.05 976.50 C 617.87 976.50 629.28 983.18 652.10 987.90 C 674.92 992.62 686.33 1000.10 709.15 1000.10 C 731.97 1000.10 743.38 948.00 766.20 948.00 C 789.02 948.00 800.43 981.30 823.25 985.40 C 846.07 989.50 857.48 989.50 880.30 989.50 C 903.12 989.50 914.53 981.00 937.35 981.00 C 960.17 981.00 971.58 982.18 994.40 983.80 C 1017.22 985.42 1028.63 989.10 1051.45 989.10 C 1074.27 989.10 1085.68 981.20 1108.50 978.10 C 1131.32 975.00 1142.73 973.60 1165.55 973.60 C 1188.37 973.60 1199.78 985.40 1222.60 985.40 C 1245.42 985.40 1256.83 985.40 1279.65 982.90 C 1302.47 980.40 1313.88 942.10 1336.70 942.10 C 1359.52 942.10 1370.93 982.40 1393.75 990.80 C 1416.57 999.20 1427.98 996.70 1450.80 999.20 C 1473.62 1001.70 1485.03 1003.30 1507.85 1003.30 C 1530.67 1003.30 1542.08 996.25 1564.90 996.25 C 1587.72 996.25 1599.13 1002.50 1621.95 1002.50 C 1644.77 1002.50 1656.18 1002.50 1679.00 998.30 C 1701.82 994.10 1713.23 954.60 1736.05 954.60 C 1758.87 954.60 1770.28 961.18 1793.10 969.60 C 1815.92 978.02 1827.33 989.70 1850.15 996.70 C 1872.97 1003.70 1884.38 1000.78 1907.20 1004.60 C 1930.02 1008.42 1941.43 1007.97 1964.25 1015.80 C 1987.07 1023.63 1998.48 1030.41 2021.30 1043.75 C 2044.12 1057.09 2078.35 1082.50 2078.35 1082.50" fill="none" stroke="#17c3ea" stroke-width="1.5"/>
<line x1="423.9" y1="1082.9" x2="2088.3" y2="1082.9" stroke="#d8e6ee" stroke-width="1.3" stroke-dasharray="10,10.35"/>
<circle cx="480.95" cy="994.80" r="3.4" fill="#4fa5dc" stroke="#fff" stroke-width="1"/>
<circle cx="538.00" cy="1007.40" r="3.4" fill="#4fa5dc" stroke="#fff" stroke-width="1"/>
<circle cx="595.05" cy="974.40" r="3.4" fill="#4fa5dc" stroke="#fff" stroke-width="1"/>
<circle cx="652.10" cy="967.50" r="3.4" fill="#4fa5dc" stroke="#fff" stroke-width="1"/>
<circle cx="709.15" cy="988.70" r="3.4" fill="#4fa5dc" stroke="#fff" stroke-width="1"/>
<circle cx="766.20" cy="899.90" r="3.4" fill="#4fa5dc" stroke="#fff" stroke-width="1"/>
<circle cx="823.25" cy="982.60" r="3.4" fill="#4fa5dc" stroke="#fff" stroke-width="1"/>
<circle cx="880.30" cy="998.90" r="3.4" fill="#4fa5dc" stroke="#fff" stroke-width="1"/>
<circle cx="937.35" cy="960.60" r="3.4" fill="#4fa5dc" stroke="#fff" stroke-width="1"/>
<circle cx="994.40" cy="963.00" r="3.4" fill="#4fa5dc" stroke="#fff" stroke-width="1"/>
<circle cx="1051.45" cy="969.60" r="3.4" fill="#4fa5dc" stroke="#fff" stroke-width="1"/>
<circle cx="1108.50" cy="953.30" r="3.4" fill="#4fa5dc" stroke="#fff" stroke-width="1"/>
<circle cx="1165.55" cy="979.70" r="3.4" fill="#4fa5dc" stroke="#fff" stroke-width="1"/>
<circle cx="1222.60" cy="1012.30" r="3.4" fill="#4fa5dc" stroke="#fff" stroke-width="1"/>
<circle cx="1279.65" cy="998.30" r="3.4" fill="#4fa5dc" stroke="#fff" stroke-width="1"/>
<circle cx="1336.70" cy="987.10" r="3.4" fill="#4fa5dc" stroke="#fff" stroke-width="1"/>
<circle cx="1393.75" cy="1008.30" r="3.4" fill="#4fa5dc" stroke="#fff" stroke-width="1"/>
<circle cx="1450.80" cy="1000.40" r="3.4" fill="#4fa5dc" stroke="#fff" stroke-width="1"/>
<circle cx="1507.85" cy="997.50" r="3.4" fill="#4fa5dc" stroke="#fff" stroke-width="1"/>
<circle cx="1564.90" cy="994.20" r="3.4" fill="#4fa5dc" stroke="#fff" stroke-width="1"/>
<circle cx="1621.95" cy="1009.60" r="3.4" fill="#4fa5dc" stroke="#fff" stroke-width="1"/>
<circle cx="1679.00" cy="998.30" r="3.4" fill="#4fa5dc" stroke="#fff" stroke-width="1"/>
<circle cx="1736.05" cy="935.00" r="3.4" fill="#4fa5dc" stroke="#fff" stroke-width="1"/>
<circle cx="1793.10" cy="953.75" r="3.4" fill="#4fa5dc" stroke="#fff" stroke-width="1"/>
<circle cx="1850.15" cy="986.70" r="3.4" fill="#4fa5dc" stroke="#fff" stroke-width="1"/>
<circle cx="1907.20" cy="1002.50" r="3.4" fill="#4fa5dc" stroke="#fff" stroke-width="1"/>
<circle cx="1964.25" cy="1021.25" r="3.4" fill="#4fa5dc" stroke="#fff" stroke-width="1"/>
<circle cx="2021.30" cy="1021.25" r="3.4" fill="#4fa5dc" stroke="#fff" stroke-width="1"/>
<circle cx="2078.35" cy="1082.50" r="3.4" fill="#4fa5dc" stroke="#fff" stroke-width="1"/>
<circle cx="480.95" cy="990.70" r="3.4" fill="#0ec4ee" stroke="#fff" stroke-width="1"/>
<circle cx="538.00" cy="994.80" r="3.4" fill="#0ec4ee" stroke="#fff" stroke-width="1"/>
<circle cx="595.05" cy="976.50" r="3.4" fill="#0ec4ee" stroke="#fff" stroke-width="1"/>
<circle cx="652.10" cy="987.90" r="3.4" fill="#0ec4ee" stroke="#fff" stroke-width="1"/>
<circle cx="709.15" cy="1000.10" r="3.4" fill="#0ec4ee" stroke="#fff" stroke-width="1"/>
<circle cx="766.20" cy="948.00" r="3.4" fill="#0ec4ee" stroke="#fff" stroke-width="1"/>
<circle cx="823.25" cy="985.40" r="3.4" fill="#0ec4ee" stroke="#fff" stroke-width="1"/>
<circle cx="880.30" cy="989.50" r="3.4" fill="#0ec4ee" stroke="#fff" stroke-width="1"/>
<circle cx="937.35" cy="981.00" r="3.4" fill="#0ec4ee" stroke="#fff" stroke-width="1"/>
<circle cx="994.40" cy="983.80" r="3.4" fill="#0ec4ee" stroke="#fff" stroke-width="1"/>
<circle cx="1051.45" cy="989.10" r="3.4" fill="#0ec4ee" stroke="#fff" stroke-width="1"/>
<circle cx="1108.50" cy="978.10" r="3.4" fill="#0ec4ee" stroke="#fff" stroke-width="1"/>
<circle cx="1165.55" cy="973.60" r="3.4" fill="#0ec4ee" stroke="#fff" stroke-width="1"/>
<circle cx="1222.60" cy="985.40" r="3.4" fill="#0ec4ee" stroke="#fff" stroke-width="1"/>
<circle cx="1279.65" cy="982.90" r="3.4" fill="#0ec4ee" stroke="#fff" stroke-width="1"/>
<circle cx="1336.70" cy="942.10" r="3.4" fill="#0ec4ee" stroke="#fff" stroke-width="1"/>
<circle cx="1393.75" cy="990.80" r="3.4" fill="#0ec4ee" stroke="#fff" stroke-width="1"/>
<circle cx="1450.80" cy="999.20" r="3.4" fill="#0ec4ee" stroke="#fff" stroke-width="1"/>
<circle cx="1507.85" cy="1003.30" r="3.4" fill="#0ec4ee" stroke="#fff" stroke-width="1"/>
<circle cx="1564.90" cy="996.25" r="3.4" fill="#0ec4ee" stroke="#fff" stroke-width="1"/>
<circle cx="1621.95" cy="1002.50" r="3.4" fill="#0ec4ee" stroke="#fff" stroke-width="1"/>
<circle cx="1679.00" cy="998.30" r="3.4" fill="#0ec4ee" stroke="#fff" stroke-width="1"/>
<circle cx="1736.05" cy="954.60" r="3.4" fill="#0ec4ee" stroke="#fff" stroke-width="1"/>
<circle cx="1793.10" cy="969.60" r="3.4" fill="#0ec4ee" stroke="#fff" stroke-width="1"/>
<circle cx="1850.15" cy="996.70" r="3.4" fill="#0ec4ee" stroke="#fff" stroke-width="1"/>
<circle cx="1907.20" cy="1004.60" r="3.4" fill="#0ec4ee" stroke="#fff" stroke-width="1"/>
<circle cx="1964.25" cy="1015.80" r="3.4" fill="#0ec4ee" stroke="#fff" stroke-width="1"/>
<circle cx="2021.30" cy="1043.75" r="3.4" fill="#0ec4ee" stroke="#fff" stroke-width="1"/>
<circle cx="2078.35" cy="1082.50" r="3.4" fill="#0ec4ee" stroke="#fff" stroke-width="1"/>
<circle cx="423.90" cy="997.00" r="3.4" fill="#4fa5dc" stroke="#fff" stroke-width="1"/>
<circle cx="423.90" cy="1000.50" r="5.5" fill="#0ec4ee" stroke="#fff" stroke-width="1.3"/>
<rect x="380" y="940" width="43.90" height="150" fill="#fff"/>
<text x="418.50" y="865.30" font-size="14.54" fill="#747474" text-anchor="end" >30K</text>
<text x="418.50" y="939.40" font-size="14.54" fill="#747474" text-anchor="end" >20K</text>
<text x="418.50" y="1013.70" font-size="14.54" fill="#747474" text-anchor="end" >10K</text>
<text x="418.50" y="1088.10" font-size="14.54" fill="#747474" text-anchor="end" >0</text>
<text x="2085.30" y="865.40" font-size="14.54" fill="#747474" >1.5M</text>
<text x="2085.30" y="939.50" font-size="14.54" fill="#747474" >1M</text>
<text x="2085.30" y="1013.80" font-size="14.54" fill="#747474" >500K</text>
<text x="2085.30" y="1088.20" font-size="14.54" fill="#747474" >0</text>
<text x="455.40" y="1100.5" font-size="13.6" fill="#747474" text-anchor="end" transform="rotate(-45 455.40 1100.5)">Dec 20, 2022</text>
<text x="512.45" y="1100.5" font-size="13.6" fill="#747474" text-anchor="end" transform="rotate(-45 512.45 1100.5)">Dec 21, 2022</text>
<text x="569.50" y="1100.5" font-size="13.6" fill="#747474" text-anchor="end" transform="rotate(-45 569.50 1100.5)">Dec 22, 2022</text>
<text x="626.55" y="1100.5" font-size="13.6" fill="#747474" text-anchor="end" transform="rotate(-45 626.55 1100.5)">Dec 23, 2022</text>
<text x="683.60" y="1100.5" font-size="13.6" fill="#747474" text-anchor="end" transform="rotate(-45 683.60 1100.5)">Dec 24, 2022</text>
<text x="740.65" y="1100.5" font-size="13.6" fill="#747474" text-anchor="end" transform="rotate(-45 740.65 1100.5)">Dec 25, 2022</text>
<text x="797.70" y="1100.5" font-size="13.6" fill="#747474" text-anchor="end" transform="rotate(-45 797.70 1100.5)">Dec 26, 2022</text>
<text x="854.75" y="1100.5" font-size="13.6" fill="#747474" text-anchor="end" transform="rotate(-45 854.75 1100.5)">Dec 27, 2022</text>
<text x="911.80" y="1100.5" font-size="13.6" fill="#747474" text-anchor="end" transform="rotate(-45 911.80 1100.5)">Dec 28, 2022</text>
<text x="968.85" y="1100.5" font-size="13.6" fill="#747474" text-anchor="end" transform="rotate(-45 968.85 1100.5)">Dec 29, 2022</text>
<text x="1025.90" y="1100.5" font-size="13.6" fill="#747474" text-anchor="end" transform="rotate(-45 1025.90 1100.5)">Dec 30, 2022</text>
<text x="1082.95" y="1100.5" font-size="13.6" fill="#747474" text-anchor="end" transform="rotate(-45 1082.95 1100.5)">Dec 31, 2022</text>
<text x="1140.00" y="1100.5" font-size="13.6" fill="#747474" text-anchor="end" transform="rotate(-45 1140.00 1100.5)">Jan 1, 2023</text>
<text x="1197.05" y="1100.5" font-size="13.6" fill="#747474" text-anchor="end" transform="rotate(-45 1197.05 1100.5)">Jan 2, 2023</text>
<text x="1254.10" y="1100.5" font-size="13.6" fill="#747474" text-anchor="end" transform="rotate(-45 1254.10 1100.5)">Jan 3, 2023</text>
<text x="1311.15" y="1100.5" font-size="13.6" fill="#747474" text-anchor="end" transform="rotate(-45 1311.15 1100.5)">Jan 4, 2023</text>
<text x="1368.20" y="1100.5" font-size="13.6" fill="#747474" text-anchor="end" transform="rotate(-45 1368.20 1100.5)">Jan 5, 2023</text>
<text x="1425.25" y="1100.5" font-size="13.6" fill="#747474" text-anchor="end" transform="rotate(-45 1425.25 1100.5)">Jan 6, 2023</text>
<text x="1482.30" y="1100.5" font-size="13.6" fill="#747474" text-anchor="end" transform="rotate(-45 1482.30 1100.5)">Jan 7, 2023</text>
<text x="1539.35" y="1100.5" font-size="13.6" fill="#747474" text-anchor="end" transform="rotate(-45 1539.35 1100.5)">Jan 8, 2023</text>
<text x="1596.40" y="1100.5" font-size="13.6" fill="#747474" text-anchor="end" transform="rotate(-45 1596.40 1100.5)">Jan 9, 2023</text>
<text x="1653.45" y="1100.5" font-size="13.6" fill="#747474" text-anchor="end" transform="rotate(-45 1653.45 1100.5)">Jan 10, 2023</text>
<text x="1710.50" y="1100.5" font-size="13.6" fill="#747474" text-anchor="end" transform="rotate(-45 1710.50 1100.5)">Jan 11, 2023</text>
<text x="1767.55" y="1100.5" font-size="13.6" fill="#747474" text-anchor="end" transform="rotate(-45 1767.55 1100.5)">Jan 12, 2023</text>
<text x="1824.60" y="1100.5" font-size="13.6" fill="#747474" text-anchor="end" transform="rotate(-45 1824.60 1100.5)">Jan 13, 2023</text>
<text x="1881.65" y="1100.5" font-size="13.6" fill="#747474" text-anchor="end" transform="rotate(-45 1881.65 1100.5)">Jan 14, 2023</text>
<text x="1938.70" y="1100.5" font-size="13.6" fill="#747474" text-anchor="end" transform="rotate(-45 1938.70 1100.5)">Jan 15, 2023</text>
<text x="1995.75" y="1100.5" font-size="13.6" fill="#747474" text-anchor="end" transform="rotate(-45 1995.75 1100.5)">Jan 16, 2023</text>
<text x="2052.80" y="1100.5" font-size="13.6" fill="#747474" text-anchor="end" transform="rotate(-45 2052.80 1100.5)">Jan 17, 2023</text>
<text x="2109.85" y="1100.5" font-size="13.6" fill="#747474" text-anchor="end" transform="rotate(-45 2109.85 1100.5)">Jan 18, 2023</text>
</svg>
<svg class="abs" style="left:0;top:0" width="2160" height="1196" viewBox="0 0 2160 1196" font-family="Liberation Sans" text-rendering="geometricPrecision"><text x="15.90" y="36.80" font-size="23.82" fill="#d7141f" font-weight="bold" font-family="Liberation Serif" textLength="108.69" lengthAdjust="spacingAndGlyphs" stroke="#d7141f" stroke-width="0.7" >DRAGON</text>
<text x="15.90" y="56.00" font-size="24.44" fill="#cf111c" font-weight="bold" font-family="Liberation Serif" textLength="111.70" lengthAdjust="spacingAndGlyphs" stroke="#cf111c" stroke-width="0.7" >METRICS</text>
<text x="194.00" y="44.80" font-size="15.99" fill="#2a8fb8" textLength="132.89" lengthAdjust="spacingAndGlyphs" >Quit Report Builder</text>
<text x="397.80" y="46.30" font-size="16.72" fill="#444" textLength="107.51" lengthAdjust="spacingAndGlyphs" >Jump to Section</text>
<text x="651.70" y="45.00" font-size="16.28" fill="#fff" textLength="59.11" lengthAdjust="spacingAndGlyphs" >Re-order</text>
<text x="1958.00" y="44.60" font-size="14.54" fill="#17ae8a" font-weight="bold" textLength="39.48" lengthAdjust="spacingAndGlyphs" >Saved</text>
<text x="2040.80" y="44.70" font-size="15.84" fill="#fff" textLength="89.71" lengthAdjust="spacingAndGlyphs" >Share Report</text>
<text x="365.60" y="115.20" font-size="18.90" fill="#2f5a6e" font-weight="bold" textLength="180.80" lengthAdjust="spacingAndGlyphs" >Monthly SEO Report</text>
<text x="926.70" y="112.00" font-size="14.54" fill="#6b6b6b" textLength="111.60" lengthAdjust="spacingAndGlyphs" >Default campaign</text>
<text x="911.70" y="136.00" font-size="14.54" fill="#4ea7da" textLength="46.01" lengthAdjust="spacingAndGlyphs" >Client 1</text>
<text x="1166.70" y="112.00" font-size="14.54" fill="#6b6b6b" textLength="117.61" lengthAdjust="spacingAndGlyphs" >Default date range</text>
<text x="1150.70" y="136.00" font-size="14.54" fill="#4ea7da" textLength="132.00" lengthAdjust="spacingAndGlyphs" >Most Recent 30 Days</text>
<text x="1373.30" y="112.00" font-size="14.54" fill="#6b6b6b" textLength="42.70" lengthAdjust="spacingAndGlyphs" >Theme</text>
<text x="1355.70" y="136.00" font-size="14.54" fill="#4ea7da" >Default</text>
<text x="1484.00" y="112.00" font-size="14.54" fill="#6b6b6b" textLength="68.31" lengthAdjust="spacingAndGlyphs" >Edit access</text>
<text x="1469.30" y="136.00" font-size="14.54" fill="#4ea7da" textLength="53.01" lengthAdjust="spacingAndGlyphs" >Only me</text>
<text x="1970.80" y="129.20" font-size="17.01" fill="#2e5a70" font-weight="bold" textLength="65.01" lengthAdjust="spacingAndGlyphs" >Example</text>
<text x="2036.30" y="129.20" font-size="17.01" fill="#e0535e" font-weight="bold" textLength="35.71" lengthAdjust="spacingAndGlyphs" >Corp</text>
<text x="23.10" y="134.40" font-size="18.60" fill="#4ea7da" font-weight="bold" textLength="106.32" lengthAdjust="spacingAndGlyphs" >Add modules</text>
<text x="162.70" y="134.40" font-size="14.68" fill="#4ea7da" textLength="156.02" lengthAdjust="spacingAndGlyphs" >Browse module gallery</text>
<text x="38.00" y="180.80" font-size="15.70" fill="#c4c4c4" textLength="109.88" lengthAdjust="spacingAndGlyphs" >Search modules</text>
<text x="23.30" y="241.90" font-size="17.15" fill="#2d5b6f" font-weight="bold" textLength="67.02" lengthAdjust="spacingAndGlyphs" >Rankings</text>
<text x="23.30" y="281.90" font-size="17.15" fill="#2d5b6f" font-weight="bold" textLength="47.89" lengthAdjust="spacingAndGlyphs" >Onsite</text>
<text x="23.30" y="321.90" font-size="17.15" fill="#2d5b6f" font-weight="bold" textLength="38.39" lengthAdjust="spacingAndGlyphs" >Links</text>
<text x="23.30" y="361.90" font-size="17.15" fill="#2d5b6f" font-weight="bold" textLength="67.01" lengthAdjust="spacingAndGlyphs" >Research</text>
<text x="23.30" y="401.90" font-size="17.15" fill="#2d5b6f" font-weight="bold" textLength="58.99" lengthAdjust="spacingAndGlyphs" >Content</text>
<text x="23.30" y="441.90" font-size="17.15" fill="#2d5b6f" font-weight="bold" textLength="42.69" lengthAdjust="spacingAndGlyphs" >Other</text>
<text x="23.30" y="481.90" font-size="17.15" fill="#2d5b6f" font-weight="bold" textLength="66.98" lengthAdjust="spacingAndGlyphs" >Analytics</text>
<text x="23.60" y="634.20" font-size="16.28" fill="#2d5b6f" font-weight="bold" textLength="71.99" lengthAdjust="spacingAndGlyphs" >Quick add</text>
<text x="52.40" y="678.70" font-size="15.12" fill="#3a6273" textLength="53.60" lengthAdjust="spacingAndGlyphs" >Rich text</text>
<text x="388.90" y="218.00" font-size="19.77" fill="#1f9bc5" font-weight="bold" textLength="161.12" lengthAdjust="spacingAndGlyphs" >Ranking Positions</text>
<text x="388.90" y="247.00" font-size="16.13" fill="#707070" textLength="142.80" lengthAdjust="spacingAndGlyphs" >Most Recent 30 Days</text>
<text x="573.60" y="247.00" font-size="16.13" fill="#707070" textLength="40.29" lengthAdjust="spacingAndGlyphs" >en-US</text>
<text x="417.20" y="290.10" font-size="15.84" fill="#707070" textLength="66.69" lengthAdjust="spacingAndGlyphs" >Position 1</text>
<text x="417.20" y="325.10" font-size="21.22" fill="#707070" font-weight="bold" textLength="22.20" lengthAdjust="spacingAndGlyphs" >65</text>
<text x="487.70" y="323.20" font-size="14.97" fill="#ee5f6b" >3</text>
<text x="562.20" y="290.10" font-size="15.84" fill="#707070" textLength="87.01" lengthAdjust="spacingAndGlyphs" >Positions 2-5</text>
<text x="562.20" y="325.10" font-size="21.22" fill="#707070" font-weight="bold" textLength="22.20" lengthAdjust="spacingAndGlyphs" >77</text>
<text x="631.80" y="323.20" font-size="14.97" fill="#ee5f6b" >1</text>
<text x="715.30" y="290.10" font-size="15.84" fill="#707070" textLength="95.79" lengthAdjust="spacingAndGlyphs" >Positions 6-10</text>
<text x="715.30" y="325.10" font-size="21.22" fill="#707070" font-weight="bold" textLength="22.50" lengthAdjust="spacingAndGlyphs" >36</text>
<text x="785.40" y="323.20" font-size="14.97" fill="#ee5f6b" >3</text>
<text x="877.10" y="290.10" font-size="15.84" fill="#707070" textLength="104.19" lengthAdjust="spacingAndGlyphs" >Positions 11-20</text>
<text x="877.10" y="325.10" font-size="21.22" fill="#707070" font-weight="bold" textLength="22.20" lengthAdjust="spacingAndGlyphs" >28</text>
<text x="946.80" y="323.20" font-size="14.97" fill="#14ab8c" >7</text>
<text x="1047.00" y="290.10" font-size="15.84" fill="#707070" textLength="104.31" lengthAdjust="spacingAndGlyphs" >Positions 21-50</text>
<text x="1047.00" y="325.10" font-size="21.22" fill="#707070" font-weight="bold" textLength="22.00" lengthAdjust="spacingAndGlyphs" >10</text>
<text x="1117.10" y="323.20" font-size="14.97" fill="#14ab8c" >1</text>
<text x="1217.50" y="290.10" font-size="15.84" fill="#707070" textLength="90.49" lengthAdjust="spacingAndGlyphs" >Positions 51+</text>
<text x="1217.50" y="325.10" font-size="21.22" fill="#707070" font-weight="bold" textLength="19.99" lengthAdjust="spacingAndGlyphs" >11</text>
<text x="1287.40" y="323.20" font-size="14.97" fill="#ee5f6b" >1</text>
<text x="1359.30" y="290.10" font-size="15.84" fill="#707070" textLength="85.01" lengthAdjust="spacingAndGlyphs" >All keywords</text>
<text x="1359.30" y="325.10" font-size="21.22" fill="#707070" font-weight="bold" textLength="34.02" lengthAdjust="spacingAndGlyphs" >227</text>
<text x="388.80" y="699.90" font-size="20.06" fill="#1f9bc5" font-weight="bold" textLength="283.22" lengthAdjust="spacingAndGlyphs" >Google Search Console Ranking</text>
<text x="388.80" y="729.00" font-size="16.13" fill="#707070" textLength="142.60" lengthAdjust="spacingAndGlyphs" >Most Recent 30 Days</text>
<text x="417.60" y="769.30" font-size="15.84" fill="#707070" textLength="72.29" lengthAdjust="spacingAndGlyphs" >Total clicks</text>
<text x="417.60" y="804.80" font-size="21.51" fill="#707070" font-weight="bold" textLength="65.19" lengthAdjust="spacingAndGlyphs" >380.8K</text>
<text x="562.20" y="769.30" font-size="15.84" fill="#707070" textLength="119.82" lengthAdjust="spacingAndGlyphs" >Total Impressions</text>
<text x="562.20" y="804.80" font-size="21.51" fill="#707070" font-weight="bold" textLength="57.69" lengthAdjust="spacingAndGlyphs" >18.4M</text>
<text x="748.20" y="769.30" font-size="15.84" fill="#707070" textLength="85.20" lengthAdjust="spacingAndGlyphs" >Average CTR</text>
<text x="748.20" y="804.80" font-size="21.51" fill="#707070" font-weight="bold" textLength="58.31" lengthAdjust="spacingAndGlyphs" >2.07%</text>
<text x="898.80" y="769.30" font-size="15.84" fill="#707070" textLength="114.38" lengthAdjust="spacingAndGlyphs" >Average position</text>
<text x="898.80" y="804.80" font-size="21.51" fill="#707070" font-weight="bold" textLength="28.60" lengthAdjust="spacingAndGlyphs" >8.4</text></svg>
<svg class="abs" style="left:86px;top:19px" width="22" height="20" viewBox="0 0 22 20"><rect x="0" y="0" width="22" height="20" fill="#fff"/><ellipse cx="11" cy="10" rx="8.6" ry="8.2" fill="#d7141f"/><rect x="6.2" y="5.5" width="1.6" height="7" fill="#fff"/><rect x="9" y="7" width="1.6" height="5.5" fill="#f3b6b9"/><rect x="11.8" y="8" width="1.6" height="4.5" fill="#fff"/><rect x="14.6" y="5" width="1.6" height="7.5" fill="#fff"/></svg>
<svg class="abs" style="left:0;top:0" width="2160" height="1196" viewBox="0 0 2160 1196"><path d="M0 0 H4 L0 11 Z" fill="#000"/><path d="M2160 0 H2156 L2160 11 Z" fill="#000"/><path d="M0 1165 A31 31 0 0 0 31 1196 H0 Z" fill="#000"/><path d="M2160 1165 A31 31 0 0 1 2129 1196 H2160 Z" fill="#000"/></svg>
</body></html>
